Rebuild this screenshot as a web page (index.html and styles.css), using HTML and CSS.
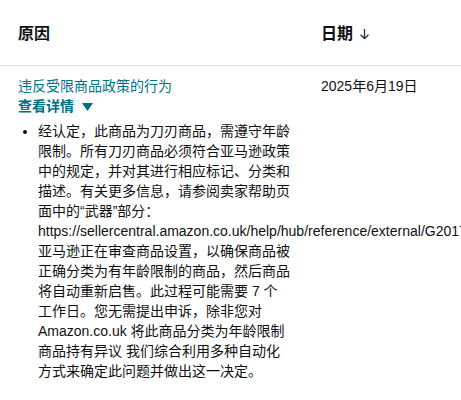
FILE: index.html
```html
<!DOCTYPE html>
<html lang="zh-CN">
<head>
<meta charset="utf-8">
<link rel="stylesheet" href="styles.css">
</head>
<body>
<div class="table">
  <div class="row head">
    <div class="cell reason">原因</div>
    <div class="cell date">日期
      <svg class="sort" width="11" height="12" viewBox="0 0 11 12"><path d="M5.5 1 V10.5 M1.5 6.8 L5.5 10.5 L9.5 6.8" fill="none" stroke="#2a2f3d" stroke-width="1.3"/></svg>
    </div>
  </div>
  <div class="row body">
    <div class="cell reason">
      <a class="link">违反受限商品政策的行为</a>
      <div class="details">查看详情
        <svg class="tri" width="11" height="8" viewBox="0 0 11 8"><polygon points="0,0 11,0 5.5,8" fill="#007185"/></svg>
      </div>
      <ul class="desc">
        <li>经认定，此商品为刀刃商品，需遵守年龄限制。所有刀刃商品必须符合亚马逊政策中的规定，并对其进行相应标记、分类和描述。有关更多信息，请参阅卖家帮助页面中的“武器”部分： <span class="url">https://sellercentral.amazon.co.uk/help/hub/reference/external/G201743940</span> 亚马逊正在审查商品设置，以确保商品被正确分类为有年龄限制的商品，然后商品将自动重新启售。此过程可能需要 7 个工作日。您无需提出申诉，除非您对 Amazon.co.uk 将此商品分类为年龄限制商品持有异议 我们综合利用多种自动化方式来确定此问题并做出这一决定。</li>
      </ul>
    </div>
    <div class="cell date">2025年6月19日</div>
  </div>
</div>
</body>
</html>
```
FILE: styles.css
```css
html, body {
  margin: 0;
  padding: 0;
  overflow: hidden;
  background: #fff;
}
body {
  font-family: "Liberation Sans", Arial, "Noto Sans CJK SC", sans-serif;
  color: #0F1111;
  font-size: 14px;
  line-height: 20px;
}
.row {
  display: grid;
  grid-template-columns: 321px 1fr;
}
.head {
  height: 66px;
  border-bottom: 1px solid #dddddd;
  align-items: center;
  font-size: 16px;
  font-weight: bold;
  line-height: 24px;
  box-sizing: border-box;
  padding-top: 2px;
}
.head .date {
  display: flex;
  align-items: center;
  gap: 6px;
}
.sort {
  display: block;
  margin-top: 1px;
}
.cell.reason {
  padding: 0 30px 0 18px;
  min-width: 0;
}
.body {
  padding-top: 10px;
}
.link {
  color: #007185;
  display: block;
}
.details {
  color: #007185;
  font-weight: bold;
  display: flex;
  align-items: center;
  gap: 8px;
}
.tri {
  display: block;
  margin-top: 2px;
}
.desc {
  margin: 5px 0 0 0;
  padding-left: 20px;
  white-space: normal;
}
.desc li {
  margin: 0;
}
.url {
  white-space: nowrap;
}
```
